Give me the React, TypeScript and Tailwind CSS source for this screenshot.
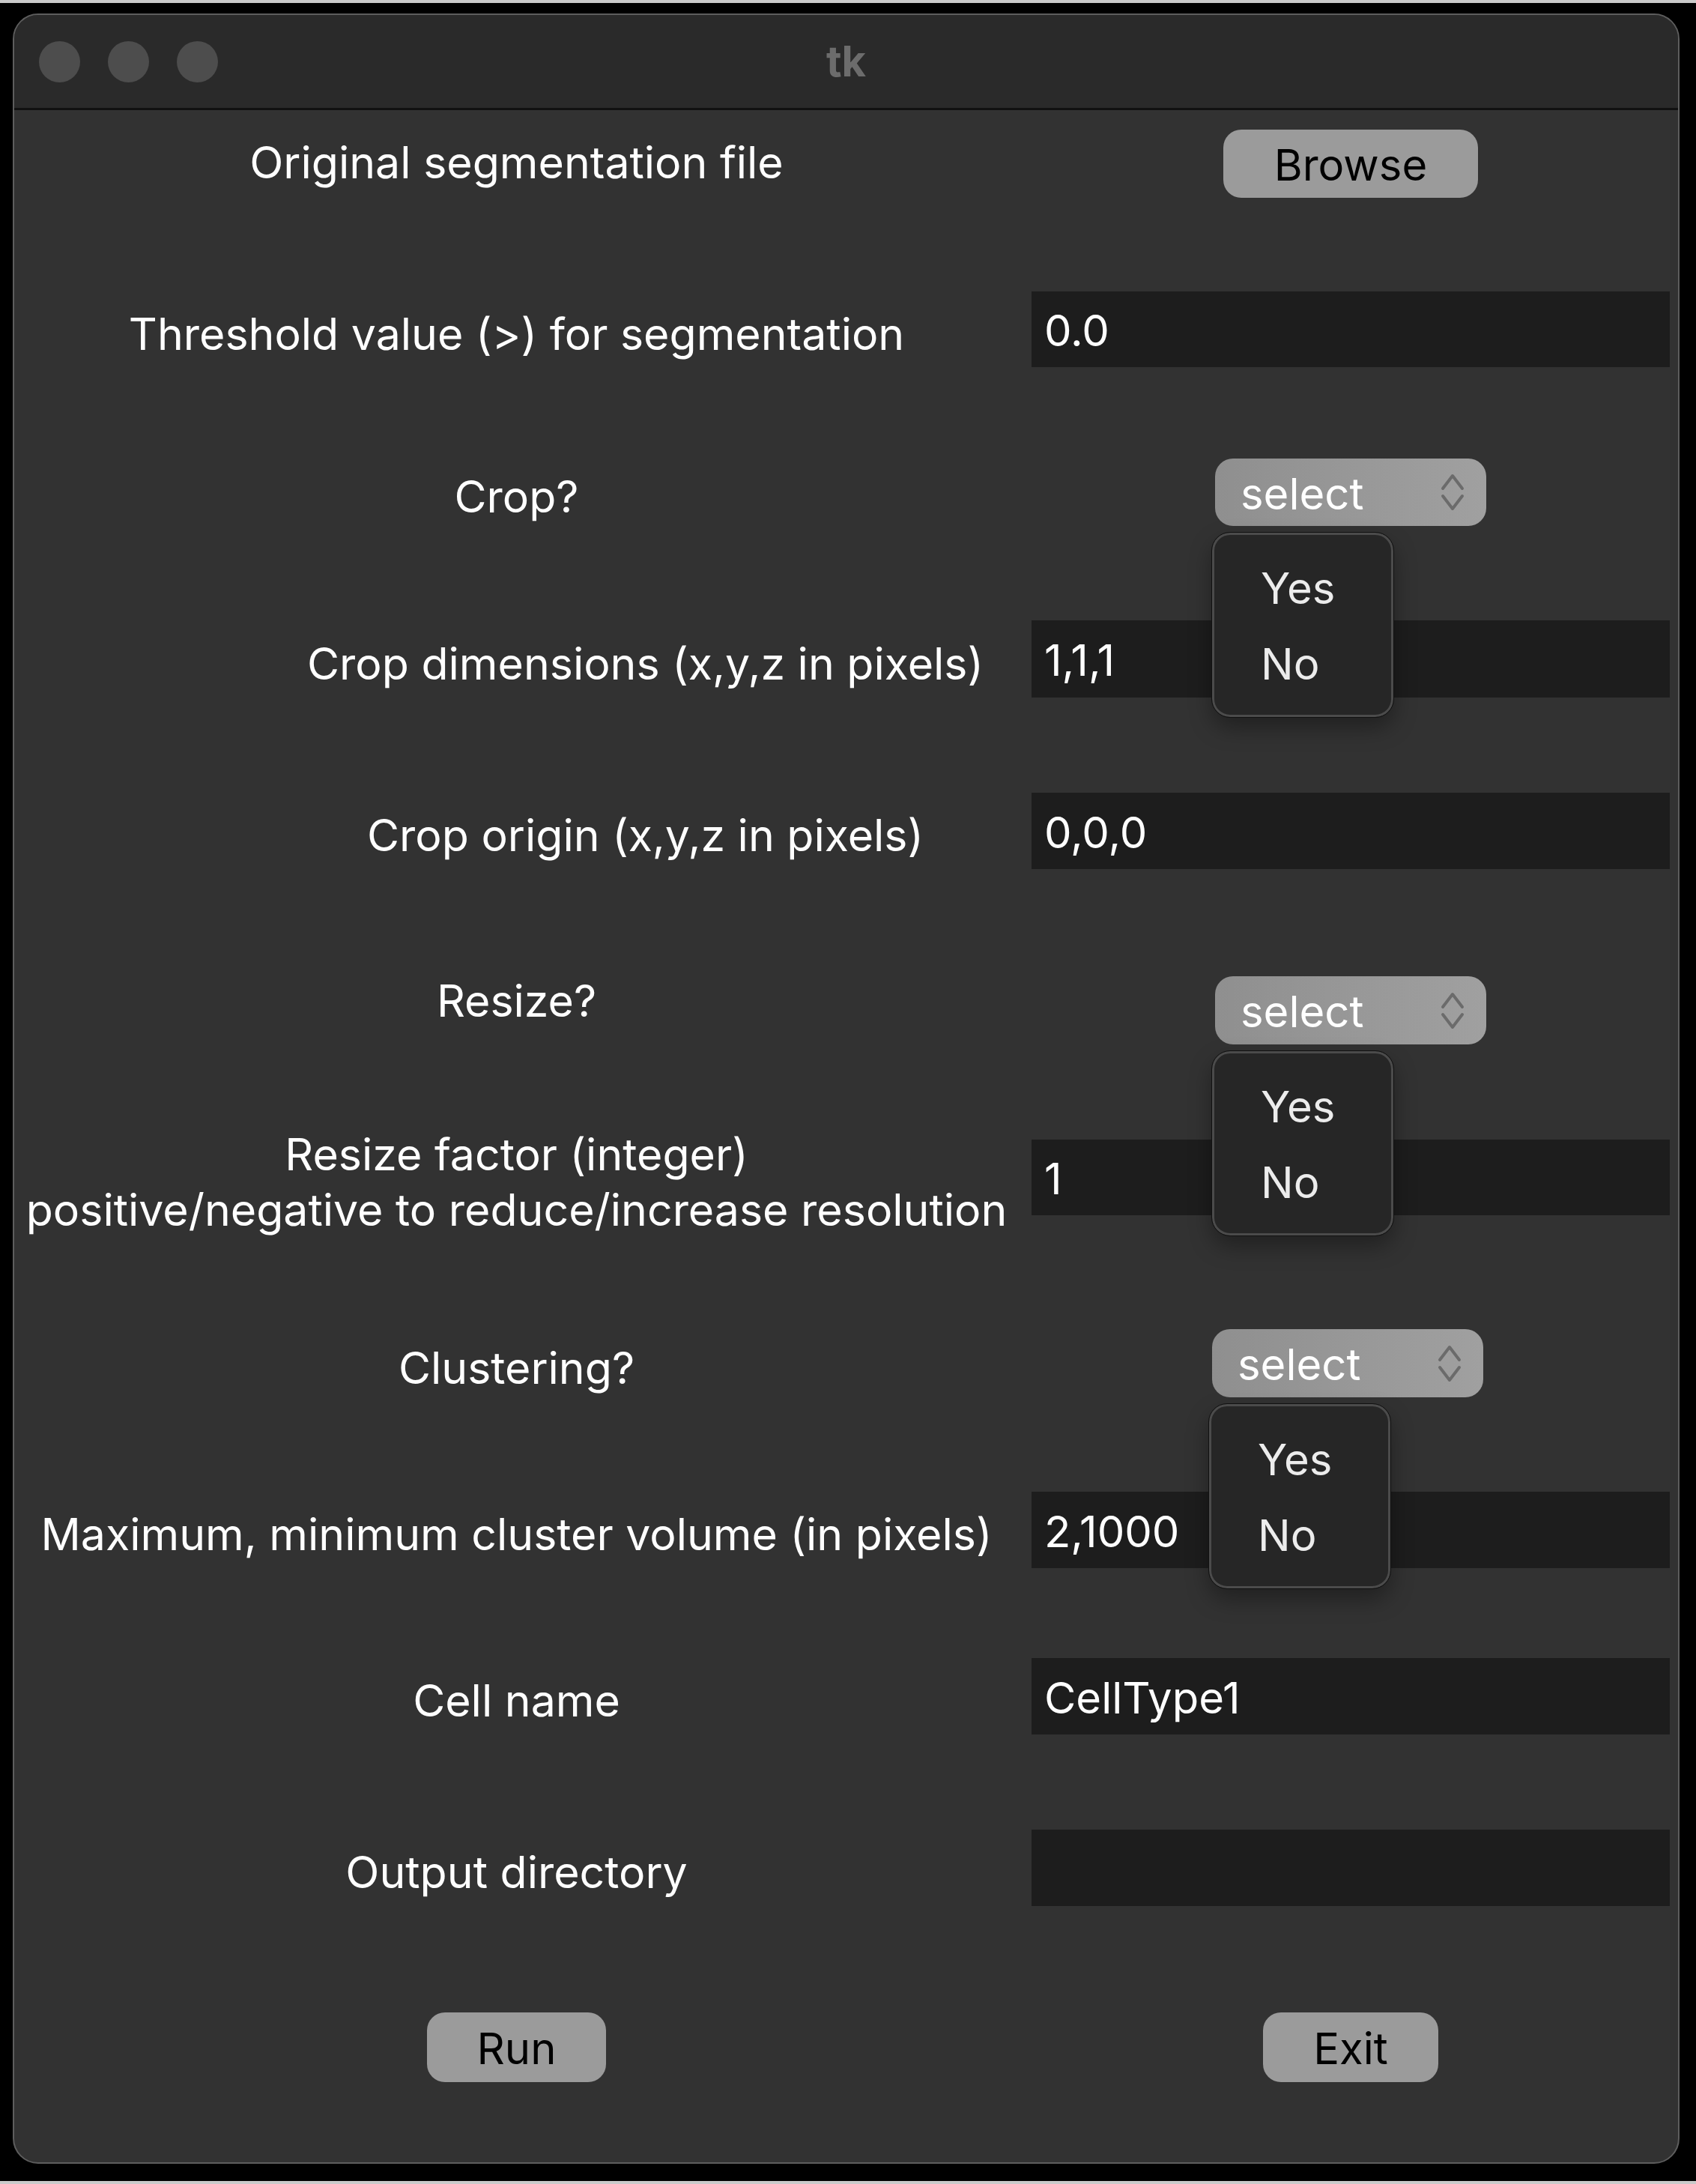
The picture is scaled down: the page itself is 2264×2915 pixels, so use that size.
import React from 'react';

const font = { fontFamily: 'Inter, "Noto Sans", "Liberation Sans", sans-serif' };

function Chevrons() {
  return (
    <svg width="34" height="56" viewBox="0 0 34 56" fill="none">
      <path d="M4 23 L17 6 L30 23" stroke="#6b6b6b" strokeWidth="4" strokeLinecap="round" strokeLinejoin="round" />
      <path d="M4 33 L17 50 L30 33" stroke="#6b6b6b" strokeWidth="4" strokeLinecap="round" strokeLinejoin="round" />
    </svg>
  );
}

function Label({ children, className = 'translate-y-[6px]' }: { children: React.ReactNode; className?: string }) {
  return (
    <div className={`text-center text-white text-[59px] leading-[74px] whitespace-nowrap ${className}`}>
      {children}
    </div>
  );
}

function Entry({ value }: { value?: string }) {
  return (
    <div className="h-full w-full bg-[#1d1d1d] flex items-center pl-[17px] pt-[4px] text-white text-[58px]">
      {value}
    </div>
  );
}

function GrayButton({ text, w }: { text: string; w: string }) {
  return (
    <div className={`${w} h-full rounded-[24px] bg-[#9b9b9b] flex items-center justify-center pt-[3px] text-black text-[58px]`}>
      {text}
    </div>
  );
}

function Select({ offset = '' }: { offset?: string }) {
  return (
    <div className={`relative w-[362px] h-full ${offset}`}>
      <div className="h-full rounded-[24px] bg-gradient-to-r from-[#8f8f8f] to-[#a0a0a0] flex items-center justify-between pl-[34px] pr-[28px]">
        <span className="text-white text-[58px] pt-[4px]">select</span>
        <Chevrons />
      </div>
      {/* open menu */}
      <div className="absolute left-[-4px] top-[calc(100%+9px)] z-10 w-[242px] h-[246px] rounded-[24px] bg-[#262626] border-[3px] border-[#4b4b4b] outline outline-1 outline-[#111] shadow-[0_14px_30px_rgba(0,0,0,0.35)] flex flex-col justify-center pl-[62px] pt-[4px] text-[#ececec] text-[58px] leading-[101px]">
        <span>Yes</span>
        <span>No</span>
      </div>
    </div>
  );
}

function Row({ mt, h, children }: { mt: string; h: string; children: React.ReactNode }) {
  return (
    <div className={`grid grid-cols-[1341px_852px] grid-rows-[100%] gap-x-[17px] items-center ${mt} ${h}`}>
      {children}
    </div>
  );
}

export default function App() {
  return (
    <div className="w-[2264px] h-[2915px] bg-black border-t-[4px] border-b-[4px] border-[#cacaca] pt-[14px] pl-[17px]" style={font}>
      <div className="w-[2225px] h-[2870px] rounded-[34px] border-2 border-[#5d5d5d] overflow-hidden bg-[#323232] flex flex-col">
        {/* Title bar */}
        <div className="relative h-[127px] shrink-0 bg-[#2a2a2a] border-b-[3px] border-[#111111] flex items-center">
          <div className="flex gap-[37px] pl-[33px]">
            <div className="w-[55px] h-[55px] rounded-full bg-[#4d4d4d]" />
            <div className="w-[55px] h-[55px] rounded-full bg-[#4d4d4d]" />
            <div className="w-[55px] h-[55px] rounded-full bg-[#4d4d4d]" />
          </div>
          <div className="absolute inset-0 flex items-center justify-center text-[#6c6c6c] text-[56px] font-bold">tk</div>
        </div>

        {/* Form */}
        <div className="flex flex-col">
          <Row mt="mt-[26px]" h="h-[91px]">
            <Label className="-translate-y-[2px]">Original segmentation file</Label>
            <div className="h-full flex justify-center">
              <GrayButton text="Browse" w="w-[340px]" />
            </div>
          </Row>

          <Row mt="mt-[125px]" h="h-[101px]">
            <Label>Threshold value (&gt;) for segmentation</Label>
            <Entry value="0.0" />
          </Row>

          <Row mt="mt-[122px]" h="h-[90px]">
            <Label>Crop?</Label>
            <div className="h-full flex justify-center">
              <Select />
            </div>
          </Row>

          <Row mt="mt-[126px]" h="h-[103px]">
            <Label className="pl-[344px] translate-y-[6px]">Crop dimensions (x,y,z in pixels)</Label>
            <Entry value="1,1,1" />
          </Row>

          <Row mt="mt-[127px]" h="h-[102px]">
            <Label className="pl-[344px] translate-y-[6px]">Crop origin (x,y,z in pixels)</Label>
            <Entry value="0,0,0" />
          </Row>

          <Row mt="mt-[143px]" h="h-[91px]">
            <Label className="-translate-y-[13px]">Resize?</Label>
            <div className="h-full flex justify-center">
              <Select />
            </div>
          </Row>

          <Row mt="mt-[127px]" h="h-[101px]">
            <Label className="translate-y-[6px]">
              Resize factor (integer)
              <br />
              positive/negative to reduce/increase resolution
            </Label>
            <Entry value="1" />
          </Row>

          <Row mt="mt-[152px]" h="h-[91px]">
            <Label>Clustering?</Label>
            <div className="h-full flex justify-center">
              <Select offset="-translate-x-[4px]" />
            </div>
          </Row>

          <Row mt="mt-[126px]" h="h-[102px]">
            <Label>Maximum, minimum cluster volume (in pixels)</Label>
            <Entry value="2,1000" />
          </Row>

          <Row mt="mt-[120px]" h="h-[102px]">
            <Label>Cell name</Label>
            <Entry value="CellType1" />
          </Row>

          <Row mt="mt-[127px]" h="h-[102px]">
            <Label>Output directory</Label>
            <Entry />
          </Row>

          <Row mt="mt-[142px]" h="h-[93px]">
            <div className="h-full flex justify-center">
              <GrayButton text="Run" w="w-[239px]" />
            </div>
            <div className="h-full flex justify-center">
              <GrayButton text="Exit" w="w-[234px]" />
            </div>
          </Row>
        </div>
      </div>
    </div>
  );
}
